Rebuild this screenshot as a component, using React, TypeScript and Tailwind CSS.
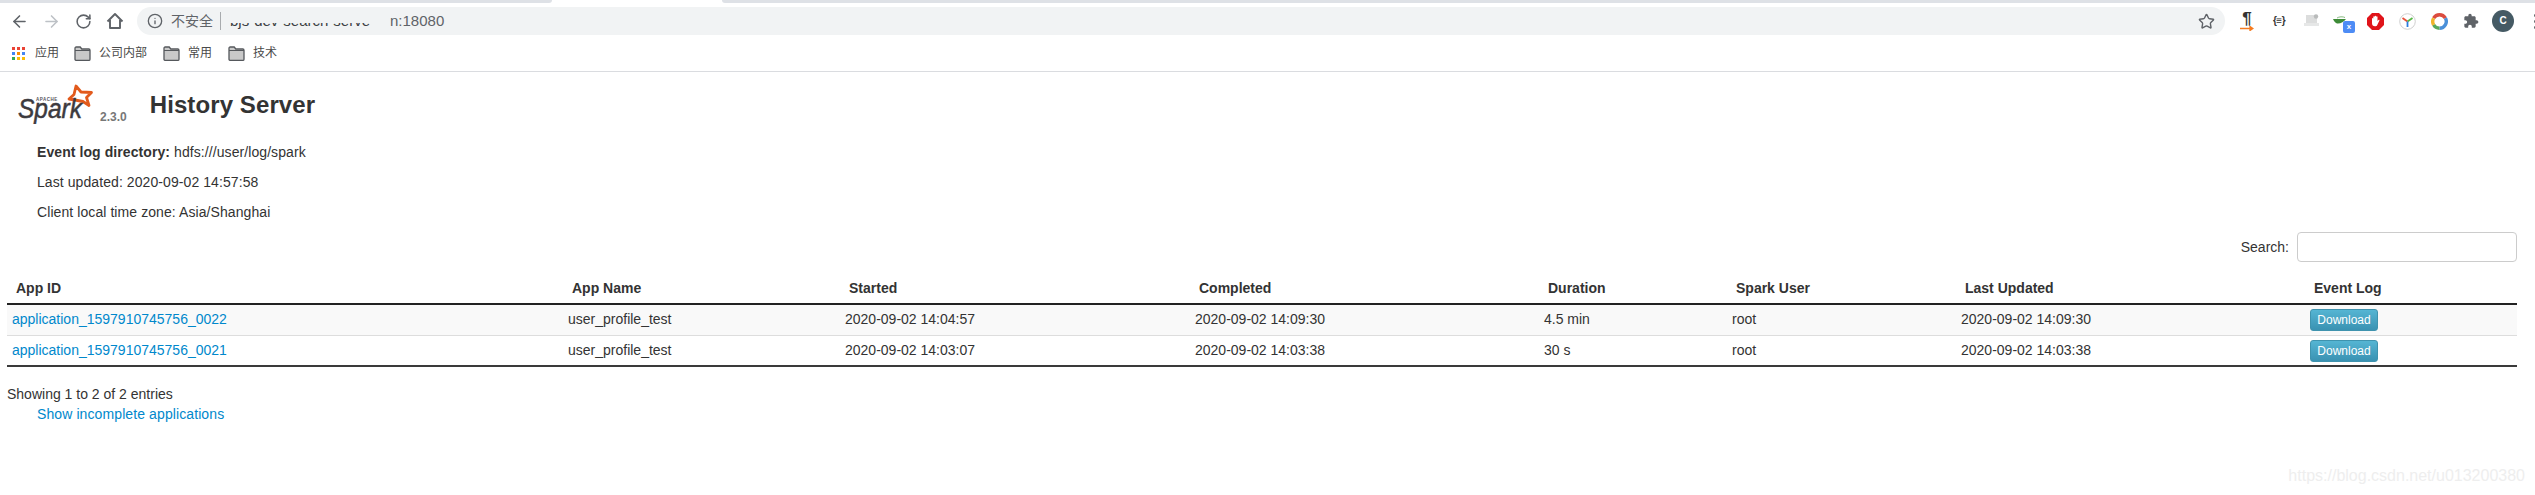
import { ArrowLeft, ArrowRight, RotateCw, Info, Star } from "lucide-react";

const FOLDER = (
  <svg width="17" height="15" viewBox="0 0 17 15" className="shrink-0">
    <path d="M1 13.2V2.2C1 1.5 1.5 1 2.2 1h4l1.6 2h7c.7 0 1.2.5 1.2 1.2v9c0 .7-.5 1.2-1.2 1.2H2.200C1.500 14.400 1 13.900 1 13.200z" fill="#c9c9c9" stroke="#55585c" strokeWidth="1.300" />
    <path d="M1 4.500h15" stroke="#55585c" strokeWidth="1" />
  </svg>
);

const COLS = [
  { key: "id", width: "w-[556px]" },
  { key: "name", width: "w-[277px]" },
  { key: "start", width: "w-[350px]" },
  { key: "end", width: "w-[349px]" },
  { key: "dur", width: "w-[188px]" },
  { key: "user", width: "w-[229px]" },
  { key: "upd", width: "w-[349px]" },
  { key: "log", width: "w-[212px]" },
];
const HEADERS = ["App ID", "App Name", "Started", "Completed", "Duration", "Spark User", "Last Updated", "Event Log"];
const ROWS = [
  { id: "application_1597910745756_0022", name: "user_profile_test", start: "2020-09-02 14:04:57", end: "2020-09-02 14:09:30", dur: "4.5 min", user: "root", upd: "2020-09-02 14:09:30", bg: "bg-[#f9f9f9]", line: "border-b border-[#dddddd]" },
  { id: "application_1597910745756_0021", name: "user_profile_test", start: "2020-09-02 14:03:07", end: "2020-09-02 14:03:38", dur: "30 s", user: "root", upd: "2020-09-02 14:03:38", bg: "bg-white", line: "border-b-2 border-[#3a3a3a]" },
];
const DOTS = ["#ea4335", "#ea4335", "#ea4335", "#4285f4", "#fb8c00", "#4285f4", "#34a853", "#fbbc05", "#fbbc05"];

function Slot({ children }: { children: React.ReactNode }) {
  return <div className="relative flex h-[36px] w-[32px] shrink-0 items-center justify-center">{children}</div>;
}

function Bookmark({ label }: { label: string }) {
  return (
    <div className="flex items-center gap-[8px] text-[12px] text-[#4a4a4a]">
      {FOLDER}
      <span>{label}</span>
    </div>
  );
}

export default function App() {
  return (
    <div className="relative h-[495px] w-[2535px] overflow-hidden bg-white font-['Liberation_Sans','Noto_Sans_CJK_SC',sans-serif] text-[14px] leading-[20px] text-[#333333]">
      {/* window strip */}
      <div className="flex h-[3px]">
        <div className="w-[552px] rounded-br-[3px] bg-[#dee1e6]" />
        <div className="w-[170px]" />
        <div className="flex-1 rounded-bl-[3px] bg-[#dee1e6]" />
      </div>

      {/* toolbar */}
      <div className="flex h-[36px] items-center overflow-hidden pl-[3px]">
        <Slot><ArrowLeft size={19} color="#5f6368" strokeWidth={2} /></Slot>
        <Slot><ArrowRight size={19} color="#bdc1c6" strokeWidth={2} /></Slot>
        <Slot><RotateCw size={17} color="#5f6368" strokeWidth={2.2} /></Slot>
        <Slot>
          <svg width="18" height="18" viewBox="0 0 18 18" fill="none" stroke="#5f6368" strokeWidth="1.900">
            <path d="M1.500 9.500 9 2l7.500 7.500M4 8v8h10V8" strokeLinejoin="round" />
          </svg>
        </Slot>
        <div className="ml-[6px] mr-[6px] flex h-[28px] w-[2088px] shrink-0 items-center rounded-full bg-[#f1f3f4] pl-[10px]">
          <Info size={16} color="#5f6368" strokeWidth={2} className="shrink-0" />
          <span className="ml-[8px] text-[14px] text-[#5f6368]">不安全</span>
          <span className="ml-[7px] h-[18px] w-px bg-[#a8abae]" />
          <span className="ml-[9px] w-[150px] whitespace-nowrap text-[15px] text-[#3c4043] [clip-path:inset(12px_0_0_0)]">bjs-dev-search-serve</span>
          <span className="ml-[10px] text-[15px] text-[#5f6368]">n:18080</span>
          <Star size={17} color="#5f6368" strokeWidth={2} className="ml-auto mr-[10px] shrink-0" />
        </div>
        <Slot>
          <div className="flex flex-col items-center">
            <span className="text-[17px] font-bold leading-[14px] text-[#333333]">¶</span>
            <svg width="14" height="5" viewBox="0 0 14 5"><path d="M0 2.500h12M10 .5l3 2-3 2z" stroke="#f47b20" strokeWidth="1.300" fill="#f47b20" /></svg>
          </div>
        </Slot>
        <Slot><span className="text-[10px] font-bold tracking-[-0.5px] text-[#333333]">{"{≡}"}</span></Slot>
        <Slot>
          <svg width="17" height="14" viewBox="0 0 17 14">
            <path d="M3 1h11v8H3z" fill="#dcdddd" />
            <path d="M1 9h15v3H1z" fill="#e6e7e7" />
            <circle cx="13" cy="2.500" r="2.200" fill="#b9bbbb" />
          </svg>
        </Slot>
        <Slot>
          <svg width="14" height="9" viewBox="0 0 14 9" className="-ml-[6px] -mt-[2px]">
            <path d="M0 3c3 0 8 0 13 0-2 3-6 5-9 4.500C2 7 1 5 0 3z" fill="#3d8b37" />
            <path d="M4 2C6 .5 10 .5 12 1.500" stroke="#86b97f" fill="none" />
          </svg>
          <span className="absolute left-[16px] top-[18px] flex h-[12px] w-[12px] items-center justify-center rounded-[2px] bg-[#4d8cf5] text-[8px] font-bold leading-none text-white">x</span>
        </Slot>
        <Slot>
          <svg width="17" height="17" viewBox="0 0 17 17">
            <path d="M5 0h7l5 5v7l-5 5H5l-5-5V5z" fill="#e0141a" />
            <path d="M5 9V5.500a.7.7 0 0 1 1.300 0V4a.7.7 0 0 1 1.400 0v-.5a.7.7 0 0 1 1.400 0V4a.7.7 0 0 1 1.400 0v4l1-1c.8-.5 1.300.2.800.8L10 12.500c-.6.600-1 .8-2 .8-2 0-3-1.300-3-3z" fill="#ffffff" />
          </svg>
        </Slot>
        <Slot>
          <svg width="17" height="17" viewBox="0 0 17 17" fill="none">
            <circle cx="8.500" cy="8.500" r="7.800" stroke="#c9c9c9" strokeWidth="0.900" />
            <path d="M3.500 5 8.500 8.500" stroke="#e8503a" strokeWidth="1.800" />
            <path d="M13.500 5 8.500 8.500" stroke="#58b947" strokeWidth="1.800" />
            <path d="M8.500 8.500V14" stroke="#2a7de1" strokeWidth="1.800" />
          </svg>
        </Slot>
        <Slot>
          <svg width="17" height="17" viewBox="0 0 17 17" fill="none" strokeWidth="3.400">
            <path d="M2.600 5.200A6.800 6.800 0 0 1 14.400 5.200" stroke="#db4c3f" />
            <path d="M14.400 5.200A6.800 6.800 0 0 1 8.500 15.300" stroke="#4a90d9" />
            <path d="M8.500 15.300A6.800 6.800 0 0 1 2.600 11.800" stroke="#57a95b" />
            <path d="M2.600 11.800A6.800 6.800 0 0 1 2.600 5.200" stroke="#f0b429" />
          </svg>
        </Slot>
        <Slot>
          <svg width="16" height="16" viewBox="0 0 24 24" fill="#5f6368">
            <path d="M20.500 11H19V7c0-1.100-.9-2-2-2h-4V3.500C13 2.120 11.880 1 10.500 1S8 2.120 8 3.500V5H4c-1.100 0-1.990.9-1.990 2v3.800H3.500c1.490 0 2.700 1.210 2.700 2.700s-1.210 2.700-2.700 2.700H2V20c0 1.100.9 2 2 2h3.800v-1.500c0-1.490 1.210-2.700 2.700-2.700 1.490 0 2.700 1.210 2.700 2.700V22H17c1.100 0 2-.9 2-2v-4h1.500c1.380 0 2.500-1.120 2.500-2.500S21.880 11 20.500 11z" />
          </svg>
        </Slot>
        <Slot>
          <span className="flex h-[22px] w-[22px] items-center justify-center rounded-full bg-[#455a64] text-[10px] font-bold text-white">C</span>
        </Slot>
        <Slot>
          <span className="flex flex-col gap-[3px]">
            <i className="block h-[3px] w-[3px] rounded-full bg-[#5f6368]" />
            <i className="block h-[3px] w-[3px] rounded-full bg-[#5f6368]" />
            <i className="block h-[3px] w-[3px] rounded-full bg-[#5f6368]" />
          </span>
        </Slot>
      </div>

      {/* bookmarks */}
      <div className="flex h-[33px] items-start border-b border-[#dadce0] pl-[12px] pt-[5px]">
        <div className="flex h-[18px] items-center gap-[10px] text-[12px] text-[#4a4a4a]">
          <div className="grid grid-cols-3 gap-[2px]">
            {DOTS.map((c, i) => (
              <i key={i} className="block h-[3px] w-[3px]" style={{ backgroundColor: c }} />
            ))}
          </div>
          <span>应用</span>
        </div>
        <div className="ml-[15px] flex h-[18px] gap-[16px]">
          <Bookmark label="公司内部" />
          <Bookmark label="常用" />
          <Bookmark label="技术" />
        </div>
      </div>

      {/* page heading */}
      <div className="mt-[12px] flex h-[40px] pl-[18px]">
        <svg width="75" height="40" viewBox="0 0 75 40" className="shrink-0">
          <path d="M58 2 63 8 73.500 8.500 68.500 13.500 71 21.500 65 17.500 57 16 51 15 56 10.500z" fill="none" stroke="#e25a1c" strokeWidth="2.800" strokeLinejoin="round" />
          <text x="18" y="17" fontSize="4.500" fontWeight="700" letterSpacing="0.500" fill="#55535a" fontFamily="Liberation Sans">APACHE</text>
          <text x="0" y="34" fontSize="27" fontStyle="italic" fill="#3c3a3e" stroke="#3c3a3e" strokeWidth="0.500" textLength="64" lengthAdjust="spacingAndGlyphs" fontFamily="Liberation Sans">Spark</text>
        </svg>
        <span className="ml-[7px] mt-[26px] text-[12px] font-bold leading-[14px] text-[#777777]">2.3.0</span>
        <h1 className="ml-[23px] mt-[6px] text-[24px] font-bold leading-[30px] tracking-[0.1px] text-[#333333]">History Server</h1>
      </div>

      {/* info */}
      <ul className="mt-[18px] flex flex-col gap-[10px] pl-[37px] tracking-[0.08px]">
        <li><strong>Event log directory:</strong> hdfs:///user/log/spark</li>
        <li>Last updated: 2020-09-02 14:57:58</li>
        <li>Client local time zone: Asia/Shanghai</li>
      </ul>

      {/* search */}
      <div className="mt-[10px] flex items-center justify-end gap-[8px] pr-[18px]">
        <label htmlFor="search">Search:</label>
        <input id="search" className="h-[30px] w-[220px] rounded-[4px] border border-[#cccccc] bg-white" />
      </div>

      {/* table */}
      <table className="mx-[7px] mt-[11px] w-[2510px] table-fixed border-separate border-spacing-0">
        <colgroup>
          {COLS.map((c) => (
            <col key={c.key} className={c.width} />
          ))}
        </colgroup>
        <thead>
          <tr>
            {HEADERS.map((h) => (
              <th key={h} className="h-[32px] border-b-2 border-[#222222] pl-[9px] text-left font-bold">{h}</th>
            ))}
          </tr>
        </thead>
        <tbody>
          {ROWS.map((r) => (
            <tr key={r.id} className={r.bg}>
              <td className={`h-[31px] pb-[2px] pl-[5px] ${r.line}`}><a href="#" className="text-[#0088cc]">{r.id}</a></td>
              <td className={`pb-[2px] pl-[5px] ${r.line}`}>{r.name}</td>
              <td className={`pb-[2px] pl-[5px] ${r.line}`}>{r.start}</td>
              <td className={`pb-[2px] pl-[5px] ${r.line}`}>{r.end}</td>
              <td className={`pb-[2px] pl-[5px] ${r.line}`}>{r.dur}</td>
              <td className={`pb-[2px] pl-[5px] ${r.line}`}>{r.user}</td>
              <td className={`pb-[2px] pl-[5px] ${r.line}`}>{r.upd}</td>
              <td className={`pl-[5px] ${r.line}`}>
                <button className="flex h-[22px] w-[68px] items-center justify-center rounded-[3px] border border-[#3f93ae] bg-gradient-to-b from-[#55b5d3] to-[#3a92b2] text-[12px] text-white">Download</button>
              </td>
            </tr>
          ))}
        </tbody>
      </table>

      {/* footer */}
      <div className="mt-[17px] pl-[7px]">Showing 1 to 2 of 2 entries</div>
      <a href="#" className="block pl-[37px] tracking-[0.1px] text-[#0088cc]">Show incomplete applications</a>

      <span className="absolute bottom-[9px] right-[10px] text-[16px] text-[#eeeeee]">https://blog.csdn.net/u013200380</span>
    </div>
  );
}
